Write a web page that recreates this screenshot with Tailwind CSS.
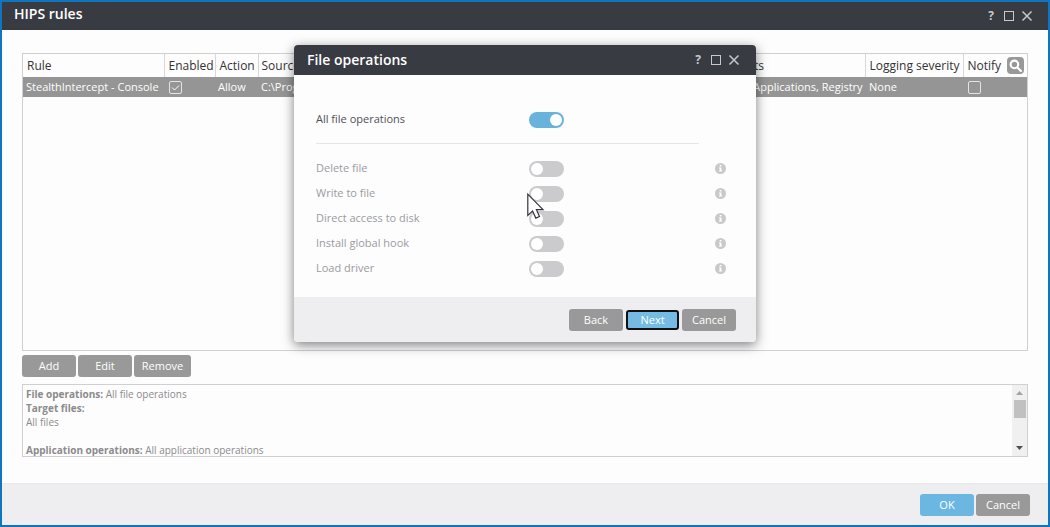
<!DOCTYPE html>
<html lang="en">
<head>
  <meta charset="UTF-8">
  <meta name="viewport" content="width=device-width, initial-scale=1.0">
  <title>HIPS rules</title>
  <script src="https://cdn.jsdelivr.net/npm/@tailwindcss/browser@4"></script>
</head>
<body class="font-['Open_Sans',sans-serif] text-[11px] text-[#333]">
  <div class="relative flex min-h-screen flex-col border-2 border-[#0f75bf] bg-[#fdfdfe]">

    <!-- Title bar -->
    <header class="flex h-7 shrink-0 items-center justify-between bg-[#393b43] pr-[15px] pl-3 text-white">
      <h1 class="pb-1 text-sm leading-5 font-semibold">HIPS rules</h1>
      <div class="flex items-center gap-1.5 text-[#c8c8cc]">
        <button type="button" aria-label="Help" class="w-3 text-xs leading-4 font-bold">?</button>
        <button type="button" aria-label="Maximize">
          <svg class="size-3" viewBox="0 0 12 12" fill="none" stroke="currentColor"><rect x="1.5" y="1.5" width="9" height="9"/></svg>
        </button>
        <button type="button" aria-label="Close">
          <svg class="size-3" viewBox="0 0 12 12" fill="none" stroke="currentColor" stroke-width="1.5"><path d="M1.5 1.5l9 9M10.5 1.5l-9 9"/></svg>
        </button>
      </div>
    </header>

    <main class="flex grow flex-col px-5 pt-[23px] pb-[26px]">
      <!-- Rules table -->
      <div class="min-h-[298px] grow border border-[#d0d0d2]">
        <table class="w-full table-fixed text-left whitespace-nowrap">
          <colgroup>
            <col class="w-[141px]">
            <col class="w-[51px]">
            <col class="w-[43px]">
            <col>
            <col class="w-[147px]">
            <col class="w-[98px]">
            <col class="w-16">
          </colgroup>
          <thead class="text-xs">
            <tr class="h-[23px] divide-x divide-[#d8d8da]">
              <th class="pl-1 font-normal">Rule</th>
              <th class="pl-1 font-normal">Enabled</th>
              <th class="pl-1 font-normal">Action</th>
              <th class="pl-[3px] font-normal">Source applications</th>
              <th class="pl-1 font-normal">Targets</th>
              <th class="pl-1 font-normal">Logging severity</th>
              <th class="pl-1 font-normal">
                <div class="flex items-center justify-between pr-[3px]">
                  Notify
                  <button type="button" aria-label="Search" class="flex size-[17px] items-center justify-center rounded-sm bg-[#999]">
                    <svg class="size-[13px]" viewBox="0 0 12 12" fill="none" stroke="#fff" stroke-width="2" stroke-linecap="round"><circle cx="5" cy="5" r="3.5"/><path d="M8 8l3 3"/></svg>
                  </button>
                </div>
              </th>
            </tr>
          </thead>
          <tbody>
            <tr class="h-5 bg-[#959595] font-medium text-white">
              <td class="pl-[3px]">StealthIntercept - Console</td>
              <td class="pl-[5px]">
                <label class="relative block size-[13px]">
                  <input type="checkbox" aria-label="Enabled" checked class="peer block size-[13px] appearance-none rounded-xs border border-[#e4e4e4]">
                  <svg class="pointer-events-none absolute inset-0 hidden size-[13px] peer-checked:block" viewBox="0 0 13 13" fill="none" stroke="#fff"><path d="M3 6.5l2.5 2.5 4.5-4.5"/></svg>
                </label>
              </td>
              <td class="pl-[3px]">Allow</td>
              <td class="pl-[3px]">C:\Program Files\StealthIntercept</td>
              <td class="pl-[7px]">Files, Applications, Registry</td>
              <td class="pl-1">None</td>
              <td class="pl-[5px]">
                <input type="checkbox" aria-label="Notify" class="block size-[13px] appearance-none rounded-xs border border-[#e4e4e4]">
              </td>
            </tr>
          </tbody>
        </table>
      </div>

      <div class="mt-1 flex gap-0.5 text-white">
        <button type="button" class="h-[22px] w-[54px] rounded-[3px] bg-[#999]">Add</button>
        <button type="button" class="h-[22px] w-[54px] rounded-[3px] bg-[#999]">Edit</button>
        <button type="button" class="h-[22px] w-[57px] rounded-[3px] bg-[#999]">Remove</button>
      </div>

      <!-- Details of the selected rule -->
      <div class="mt-[7px] flex h-[73px] shrink-0 border border-[#d0d0d2]">
        <div class="grow overflow-hidden pt-0.5 pl-[3px] text-[10px] leading-[14px] text-[#8b8b8b]">
          <p><b>File operations:</b> All file operations</p>
          <p><b>Target files:</b></p>
          <p>All files</p>
          <p>&nbsp;</p>
          <p><b>Application operations:</b> All application operations</p>
        </div>
        <div class="flex w-[15px] flex-col items-center bg-[#f0f0f1]">
          <button type="button" aria-label="Scroll up" class="flex h-[15px] items-center">
            <svg class="h-1 w-[7px]" viewBox="0 0 7 4" fill="#a3a3a3"><path d="M0 4L3.5 0 7 4z"/></svg>
          </button>
          <div class="h-[18px] w-3 bg-[#c1c1c1]"></div>
          <button type="button" aria-label="Scroll down" class="mt-auto flex h-4 items-center">
            <svg class="h-1 w-[7px]" viewBox="0 0 7 4" fill="#505050"><path d="M0 0L3.5 4 7 0z"/></svg>
          </button>
        </div>
      </div>
    </main>

    <footer class="flex h-[42px] shrink-0 items-center justify-end gap-0.5 border-t border-[#e8e8ea] bg-[#eeeef0] pr-[18px] text-white">
      <button type="button" class="h-[22px] w-[54px] rounded-[3px] bg-[#6bb7e1] pt-0.5">OK</button>
      <button type="button" class="h-[22px] w-[54px] rounded-[3px] bg-[#999] pt-0.5">Cancel</button>
    </footer>

    <!-- File operations dialog -->
    <section role="dialog" aria-labelledby="dialogTitle" class="absolute inset-x-0 top-[43px] mx-auto w-[462px] rounded-[4px] bg-[#fdfdfe] shadow-[0_3px_12px_rgba(0,0,0,0.5)]">
      <div class="flex h-[30px] items-center justify-between rounded-t-[4px] bg-[#393b43] pr-4 pl-[13px] text-white">
        <h2 id="dialogTitle" class="text-sm leading-5 font-semibold">File operations</h2>
        <div class="flex items-center gap-1.5 text-[#c8c8cc]">
          <button type="button" aria-label="Help" class="w-3 text-xs leading-4 font-bold">?</button>
          <button type="button" aria-label="Maximize">
            <svg class="size-3" viewBox="0 0 12 12" fill="none" stroke="currentColor"><rect x="1.5" y="1.5" width="9" height="9"/></svg>
          </button>
          <button type="button" aria-label="Close">
            <svg class="size-3" viewBox="0 0 12 12" fill="none" stroke="currentColor" stroke-width="1.5"><path d="M1.5 1.5l9 9M10.5 1.5l-9 9"/></svg>
          </button>
        </div>
      </div>

      <div class="px-[22px] pt-8 pb-4">
        <div class="flex h-[25px] items-center">
          <label for="allOps" class="w-[213px] text-[#505055]">All file operations</label>
          <input id="allOps" type="checkbox" checked class="h-4 w-[35px] appearance-none rounded-full bg-[#cbcacc] p-0.5 before:block before:size-3 before:rounded-full before:bg-white checked:bg-[#67b3dc] checked:before:ml-auto">
        </div>
        <hr class="mt-[11px] mr-[35px] mb-3 border-[#e6e6e8]">

        <div id="operations" class="text-[#9b9b9f]"></div>
      </div>

      <div class="flex h-[45px] items-center justify-end gap-[3px] rounded-b-[4px] bg-[#eeeef0] pr-5 text-white">
        <button type="button" class="h-[22px] w-[54px] rounded-[3px] bg-[#999] pt-0.5">Back</button>
        <button type="button" class="flex h-5 w-[53px] items-center justify-center rounded-[3px] border-2 border-[#111] bg-[#74bce4] pt-0.5">Next</button>
        <button type="button" class="h-[22px] w-[54px] rounded-[3px] bg-[#999] pt-0.5">Cancel</button>
      </div>
    </section>

    <!-- Mouse pointer -->
    <svg class="pointer-events-none absolute top-[191px] left-[525px] h-[27px] w-[18px]" viewBox="0 0 18 27" fill="#fff" stroke="#33333d" stroke-width="1.2"><path d="M.8 1.2v21.3l4.8-4.4 3.2 7 3.7-1.6-3.1-6.8h6.6z"/></svg>
  </div>

  <script>
    const operations = [
      { id: 'deleteFile', name: 'Delete file' },
      { id: 'writeFile', name: 'Write to file' },
      { id: 'diskAccess', name: 'Direct access to disk' },
      { id: 'globalHook', name: 'Install global hook' },
      { id: 'loadDriver', name: 'Load driver' },
    ];

    document.getElementById('operations').innerHTML = operations.map(op => `
      <div class="flex h-[25px] items-center">
        <label for="${op.id}" class="w-[213px]">${op.name}</label>
        <input id="${op.id}" type="checkbox" disabled class="h-4 w-[35px] appearance-none rounded-full bg-[#cbcacc] p-0.5 before:block before:size-3 before:rounded-full before:bg-white">
        <button type="button" aria-label="About ${op.name}" class="mr-2 ml-auto">
          <svg class="size-[11px]" viewBox="0 0 11 11"><circle cx="5.5" cy="5.5" r="5.5" fill="#c9c9cb"/><path d="M4.7 2h1.7v1.4H4.7zM4 4.4h2.4v3h.8v1.1H3.9V7.4h.8V5.5H4z" fill="#fff"/></svg>
        </button>
      </div>
    `).join('');
  </script>
</body>
</html>
